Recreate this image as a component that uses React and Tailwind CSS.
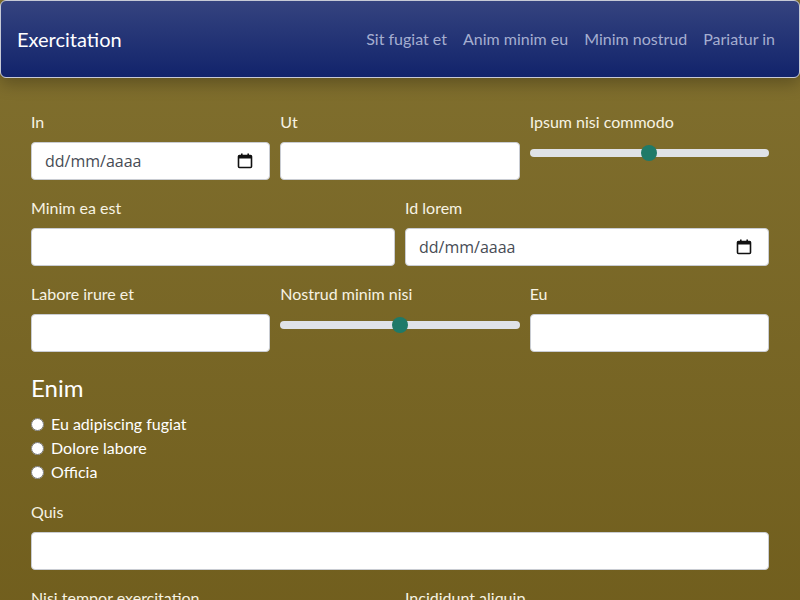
import { useState } from 'react';

const CalendarIcon = () => (
  <svg width="16" height="16" viewBox="0 0 16 16" className="shrink-0">
    <rect x="1.5" y="2.5" width="13" height="12" rx="1" fill="none" stroke="#111" strokeWidth="1.6" />
    <rect x="1.5" y="2.5" width="13" height="3" fill="#111" />
    <rect x="4" y="0.5" width="1.6" height="3" fill="#111" />
    <rect x="10.4" y="0.5" width="1.6" height="3" fill="#111" />
  </svg>
);

function Field({ label, children }) {
  return (
    <div className="flex flex-col">
      <label className="text-base leading-6 mb-2 text-[#f7f3e3]">{label}</label>
      {children}
    </div>
  );
}

const TextInput = () => (
  <input type="text" className="h-[38px] w-full rounded bg-white border border-[#c9ccd2] px-3 outline-none" />
);

const DateInput = () => (
  <div className="h-[38px] w-full rounded bg-white border border-[#c9ccd2] pl-[13px] pr-[16px] flex items-center justify-between">
    <span className="text-[#474c55] text-base" style={{ fontFamily: '"Open Sans", sans-serif' }}>dd/mm/aaaa</span>
    <CalendarIcon />
  </div>
);

function Slider() {
  const [val, setVal] = useState(50);
  return (
    <div className="h-[22px] flex items-center">
      <input
        type="range"
        min="0"
        max="100"
        value={val}
        onChange={(e) => setVal(e.target.value)}
        className="w-full h-2 appearance-none rounded-full bg-[#dfe2e7] outline-none [&::-webkit-slider-thumb]:appearance-none [&::-webkit-slider-thumb]:w-4 [&::-webkit-slider-thumb]:h-4 [&::-webkit-slider-thumb]:rounded-full [&::-webkit-slider-thumb]:bg-[#1f7a68] [&::-webkit-slider-thumb]:border-0"
      />
    </div>
  );
}

export default function App() {
  const links = ['Sit fugiat et', 'Anim minim eu', 'Minim nostrud', 'Pariatur in'];
  return (
    <div
      className="min-h-screen bg-gradient-to-b from-[#81702f] to-[#6f5c1b]"
      style={{ fontFamily: 'Lato, "Open Sans", sans-serif' }}
    >
      {/* header */}
      <header className="h-[78px] rounded-md border border-[#c7cad6] bg-gradient-to-b from-[#35437f] to-[#12236b] shadow-[0_6px_16px_rgba(0,0,0,0.25)] flex items-center justify-between pl-4 pr-6">
        <span className="text-white text-xl">Exercitation</span>
        <nav className="flex items-center gap-4">
          {links.map((l) => (
            <a key={l} className="text-[#a5aed0] text-base">{l}</a>
          ))}
        </nav>
      </header>

      <main className="px-[31px] pt-8 pb-10">
        <div className="grid grid-cols-3 gap-x-[10px] gap-y-4">
          <Field label="In"><DateInput /></Field>
          <Field label="Ut"><TextInput /></Field>
          <Field label="Ipsum nisi commodo"><Slider /></Field>
        </div>
        <div className="grid grid-cols-2 gap-x-[10px] mt-4">
          <Field label="Minim ea est"><TextInput /></Field>
          <Field label="Id lorem"><DateInput /></Field>
        </div>
        <div className="grid grid-cols-3 gap-x-[10px] mt-4">
          <Field label="Labore irure et"><TextInput /></Field>
          <Field label="Nostrud minim nisi"><Slider /></Field>
          <Field label="Eu"><TextInput /></Field>
        </div>

        <h2 className="mt-5 text-2xl leading-8 text-white">Enim</h2>
        <div className="mt-2 flex flex-col">
          {['Eu adipiscing fugiat', 'Dolore labore', 'Officia'].map((o) => (
            <label key={o} className="flex items-center gap-[7px] leading-6 text-white text-base">
              <input type="radio" name="enim" className="w-[13px] h-[13px]" />
              {o}
            </label>
          ))}
        </div>

        <div className="mt-4">
          <Field label="Quis"><TextInput /></Field>
        </div>
        <div className="grid grid-cols-2 gap-x-[10px] mt-4">
          <Field label="Nisi tempor exercitation"><TextInput /></Field>
          <Field label="Incididunt aliquip"><TextInput /></Field>
        </div>
      </main>
    </div>
  );
}
